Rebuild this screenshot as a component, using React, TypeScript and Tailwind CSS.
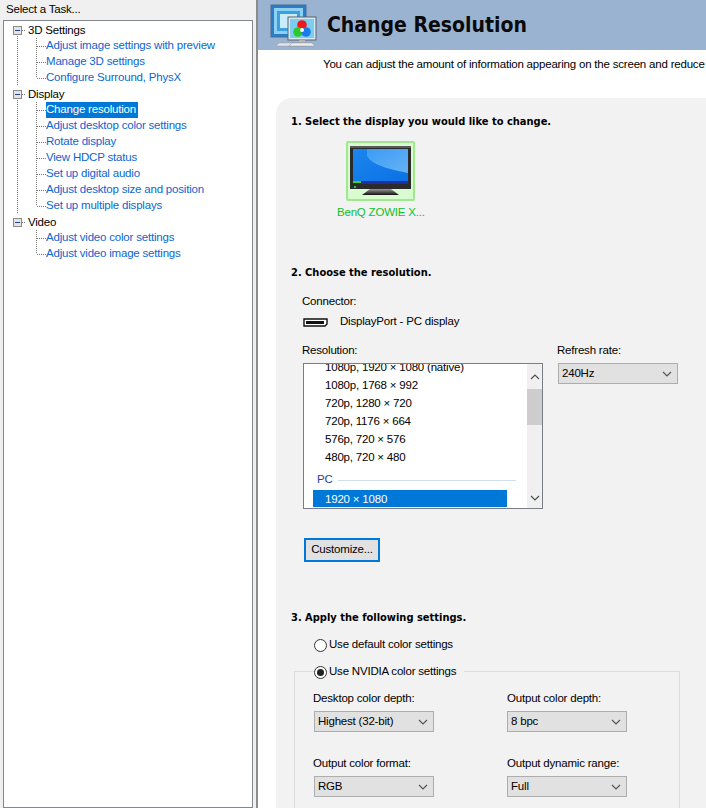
import React from "react";

const ui = "font-['Liberation_Sans',Arial,sans-serif]";
const bold = "font-['DejaVu_Sans_Condensed','DejaVu_Sans',sans-serif] font-bold";

function TreeLine({ kind, last }: { kind: "parent" | "child"; last?: boolean }) {
  if (kind === "parent") {
    return (
      <svg width="28" height="16" className="shrink-0 block">
        {!last && <line x1="17.5" y1="12" x2="17.5" y2="16" stroke="#777" strokeDasharray="1 1" />}
        <rect x="13.5" y="4.5" width="8" height="8" fill="#e4e4e4" stroke="#8a8a8a" />
        <line x1="15" y1="8.5" x2="20" y2="8.5" stroke="#24408a" />
        <line x1="22" y1="8.5" x2="26" y2="8.5" stroke="#777" strokeDasharray="1 1" />
      </svg>
    );
  }
  return (
    <svg width="46" height="16" className="shrink-0 block">
      <line x1="17.5" y1="0" x2="17.5" y2="16" stroke="#777" strokeDasharray="1 1" />
      <line x1="36.5" y1="0" x2="36.5" y2={last ? 8 : 16} stroke="#777" strokeDasharray="1 1" />
      <line x1="37" y1="8.5" x2="46" y2="8.5" stroke="#777" strokeDasharray="1 1" />
    </svg>
  );
}

function TreeChild({ label, last, selected, endTree }: { label: string; last?: boolean; selected?: boolean; endTree?: boolean }) {
  return (
    <div className="flex h-4 items-center">
      <div className="relative">
        <TreeLine kind="child" last={last} />
        {endTree && <div className="absolute left-[14px] top-0 h-4 w-[7px] bg-white" />}
      </div>
      <span
        className={
          selected
            ? "bg-[#0078d7] text-white h-[16px] leading-[14px] pr-[2px] whitespace-nowrap"
            : "text-[#0b66cf] leading-[15px] mb-[2px] whitespace-nowrap"
        }
      >
        {label}
      </span>
    </div>
  );
}

function TreeParent({ label, last }: { label: string; last?: boolean }) {
  return (
    <div className="flex h-4 items-center">
      <TreeLine kind="parent" last={last} />
      <span className="text-black leading-[15px]">{label}</span>
    </div>
  );
}

function Chevron({ color = "#555" }: { color?: string }) {
  return (
    <svg width="10" height="6" viewBox="0 0 10 6" className="block">
      <path d="M1 1l4 4 4-4" fill="none" stroke={color} strokeWidth="1.2" />
    </svg>
  );
}

function Select({ value }: { value: string }) {
  return (
    <div className="flex h-[21px] w-[120px] items-center justify-between border border-[#adadad] bg-[#e1e1e1] pl-[3px] pr-[5px] text-black">
      <span className="whitespace-nowrap">{value}</span>
      <Chevron />
    </div>
  );
}

function MonitorIcon() {
  return (
    <svg width="61" height="50" viewBox="0 0 61 50" className="block">
      <defs>
        <linearGradient id="scr" x1="0" y1="0" x2="1" y2="1">
          <stop offset="0" stopColor="#1a86ee" />
          <stop offset="1" stopColor="#0b70e4" />
        </linearGradient>
        <linearGradient id="wave" x1="0" y1="0" x2="1" y2="1">
          <stop offset="0" stopColor="#3c9cf4" />
          <stop offset="1" stopColor="#66b2f6" />
        </linearGradient>
        <linearGradient id="foot" x1="0" y1="0" x2="0" y2="1">
          <stop offset="0" stopColor="#9a9a9a" />
          <stop offset="1" stopColor="#111" />
        </linearGradient>
      </defs>
      <rect x="0" y="0" width="61" height="43" fill="#2b2b2b" />
      <rect x="0" y="0" width="61" height="2" fill="#5a5a5a" />
      <rect x="3" y="3" width="55" height="35" fill="url(#scr)" />
      <path d="M17 3h41v24C44 24 22 20 17 10z" fill="url(#wave)" />
      <rect x="3" y="35" width="55" height="3" fill="#1c2ea8" />
      <rect x="3" y="35" width="8" height="2" fill="#53c72d" />
      <rect x="4" y="40" width="2" height="2" fill="#24c24a" />
      <path d="M20 43h21l8 6H12z" fill="url(#foot)" />
    </svg>
  );
}

function HeaderIcon() {
  return (
    <svg width="48" height="46" viewBox="0 0 48 46" className="block">
      <rect x="1" y="3" width="35" height="32" fill="#2c7dc6" stroke="#4c6f90" />
      <rect x="4" y="6" width="29" height="26" fill="#8ed0f2" />
      <rect x="7" y="9" width="23" height="20" fill="#3aa0e0" />
      <rect x="10" y="12" width="17" height="14" fill="#c8ecfb" />
      <path d="M9 41h22l5 3H6z" fill="#e6e6e6" stroke="#9a9a9a" strokeWidth="0.5" />
      <rect x="18" y="15" width="28" height="23" fill="#d8e6f0" stroke="#56646e" />
      <rect x="20" y="17" width="24" height="19" fill="#7ccdf0" />
      <circle cx="32" cy="23" r="4.8" fill="#f01818" />
      <circle cx="28" cy="30" r="4.8" fill="#2ec82a" />
      <circle cx="36" cy="30" r="4.8" fill="#1b7be8" />
      <circle cx="32" cy="28" r="2" fill="#fff" />
      <rect x="29" y="38" width="6" height="3" fill="#b5b5b5" />
      <path d="M22 41h20l3 3H19z" fill="#f0f0f0" stroke="#8c8c8c" strokeWidth="0.5" />
    </svg>
  );
}

function PortIcon() {
  return (
    <svg width="25" height="9" viewBox="0 0 25 9" className="block">
      <path d="M1 1h23v5l-2 2H1z" fill="#fff" stroke="#111" strokeWidth="1.4" />
      <rect x="3" y="3" width="18" height="3" fill="#111" />
    </svg>
  );
}

function Radio({ checked }: { checked?: boolean }) {
  return (
    <span className="flex h-[13px] w-[13px] items-center justify-center rounded-full border border-[#333] bg-white">
      {checked && <span className="h-[7px] w-[7px] rounded-full bg-[#222]" />}
    </span>
  );
}

const resRows = ["1080p, 1920 × 1080 (native)", "1080p, 1768 × 992", "720p, 1280 × 720", "720p, 1176 × 664", "576p, 720 × 576", "480p, 720 × 480"];

export default function App() {
  return (
    <div className={`flex h-[808px] w-[706px] overflow-hidden bg-white text-[11.5px] tracking-[-0.2px] ${ui}`}>
      <div className="flex h-full w-[256px] shrink-0 flex-col bg-[#f0f0f0] pl-[3px] pr-[3px]">
        <div className="flex h-[20px] shrink-0 items-center pl-[3px] text-black">Select a Task...</div>
        <div className="flex-1 border border-[#828790] bg-white pt-[1px]">
          <div className="-ml-[4px]">
            <TreeParent label="3D Settings" />
            <TreeChild label="Adjust image settings with preview" />
            <TreeChild label="Manage 3D settings" />
            <TreeChild label="Configure Surround, PhysX" last />
            <TreeParent label="Display" />
            <TreeChild label="Change resolution" selected />
            <TreeChild label="Adjust desktop color settings" />
            <TreeChild label="Rotate display" />
            <TreeChild label="View HDCP status" />
            <TreeChild label="Set up digital audio" />
            <TreeChild label="Adjust desktop size and position" />
            <TreeChild label="Set up multiple displays" last />
            <TreeParent label="Video" last />
            <TreeChild label="Adjust video color settings" endTree />
            <TreeChild label="Adjust video image settings" last endTree />
          </div>
        </div>
      </div>

      <div className="h-full min-w-0 flex-1 overflow-hidden border-l-2 border-[#8c8c8c] bg-white">
        <div className="flex h-[50px] items-center bg-[#9ab3d1] pl-[12px]">
          <HeaderIcon />
          <h1 className={`ml-[9px] whitespace-nowrap text-[21px] leading-none tracking-normal text-[#0a0a0a] ${bold}`}>Change Resolution</h1>
        </div>
        <p className="mt-[6px] whitespace-nowrap pl-[65px] leading-[16px] text-black">
          You can adjust the amount of information appearing on the screen and reduce flicker.
        </p>
        <div className="mt-[26px] h-[720px] rounded-tl-[16px] bg-[#f2f2f2] ml-[18px] pl-[15px] pt-[17px] text-black">
          <h2 className={`text-[11px] leading-[14px] tracking-normal whitespace-nowrap ${bold}`}>1. Select the display you would like to change.</h2>

          <div className="ml-[55px] mt-[12px] w-[76px]">
            <div className="flex h-[60px] w-[69px] items-center justify-center rounded-[2px] border-2 border-[#a0e890] bg-[#d8fbd0]">
              <MonitorIcon />
            </div>
            <div className="-ml-[9px] mt-[3px] whitespace-nowrap leading-[16px] text-[#10c02a]">BenQ ZOWIE X...</div>
          </div>

          <h2 className={`mt-[46px] text-[11px] leading-[14px] tracking-normal whitespace-nowrap ${bold}`}>2. Choose the resolution.</h2>

          <div className="ml-[11px] mt-[13px] leading-[16px]">Connector:</div>
          <div className="ml-[12px] mt-[5px] flex h-[16px] items-center">
            <PortIcon />
            <span className="ml-[12px] whitespace-nowrap">DisplayPort - PC display</span>
          </div>

          <div className="ml-[11px] mt-[12px] flex">
            <div className="w-[255px] shrink-0">
              <div className="leading-[16px]">Resolution:</div>
              <div className="ml-px mt-[5px] flex h-[146px] w-[240px] overflow-hidden border border-[#7a7d85] bg-white">
                <div className="min-w-0 flex-1 overflow-hidden">
                  <div className="-mt-[6px]">
                    {resRows.map((r) => (
                      <div key={r} className="h-[18px] whitespace-nowrap pl-[21px] leading-[18px]">{r}</div>
                    ))}
                    <div className="flex h-[24px] items-center pl-[13px] pt-[4px] text-[#2a3ea0]">
                      <span>PC</span>
                      <span className="ml-[5px] h-px w-[178px] bg-[#cfdfee]" />
                    </div>
                    <div className="ml-[9px] h-[17px] w-[194px] whitespace-nowrap bg-[#0078d7] pl-[12px] leading-[18px] text-white">1920 × 1080</div>
                  </div>
                </div>
                <div className="flex w-[15px] shrink-0 flex-col items-center bg-[#f0f0f0] text-[#505050]">
                  <div className="flex h-[25px] w-full items-center justify-center"><span className="rotate-180"><Chevron color="#505050" /></span></div>
                  <div className="h-[36px] w-full bg-[#cdcdcd]" />
                  <div className="flex-1" />
                  <div className="flex h-[20px] w-full items-center justify-center"><Chevron color="#505050" /></div>
                </div>
              </div>
            </div>
            <div>
              <div className="leading-[16px]">Refresh rate:</div>
              <div className="ml-px mt-[5px]"><Select value="240Hz" /></div>
            </div>
          </div>

          <button className="ml-[13px] mt-[29px] block h-[24px] w-[76px] border-2 border-[#0078d7] bg-[#e1e1e1] leading-none text-black">Customize...</button>

          <h2 className={`mt-[49px] text-[11px] leading-[14px] tracking-normal whitespace-nowrap ${bold}`}>3. Apply the following settings.</h2>

          <div className="ml-[23px] mt-[12px] flex h-[16px] items-center gap-[2px]">
            <Radio />
            <span className="whitespace-nowrap">Use default color settings</span>
          </div>

          <fieldset className="ml-[3px] mt-[10px] h-[200px] w-[386px] border border-[#dcdcdc] pl-[19px]">
            <legend className="flex h-[16px] items-center gap-[2px] bg-[#f2f2f2] pr-[8px] pt-[2px]">
              <Radio checked />
              <span className="whitespace-nowrap">Use NVIDIA color settings</span>
            </legend>
            <div className="mt-[11px] grid grid-cols-[193px_120px] gap-y-[23px]">
              <div>
                <div className="-ml-px leading-[16px]">Desktop color depth:</div>
                <div className="mt-[5px]"><Select value="Highest (32-bit)" /></div>
              </div>
              <div>
                <div className="leading-[16px]">Output color depth:</div>
                <div className="mt-[5px]"><Select value="8 bpc" /></div>
              </div>
              <div>
                <div className="-ml-px leading-[16px]">Output color format:</div>
                <div className="mt-[5px]"><Select value="RGB" /></div>
              </div>
              <div>
                <div className="whitespace-nowrap leading-[16px]">Output dynamic range:</div>
                <div className="mt-[5px]"><Select value="Full" /></div>
              </div>
            </div>
          </fieldset>
        </div>
      </div>
    </div>
  );
}
